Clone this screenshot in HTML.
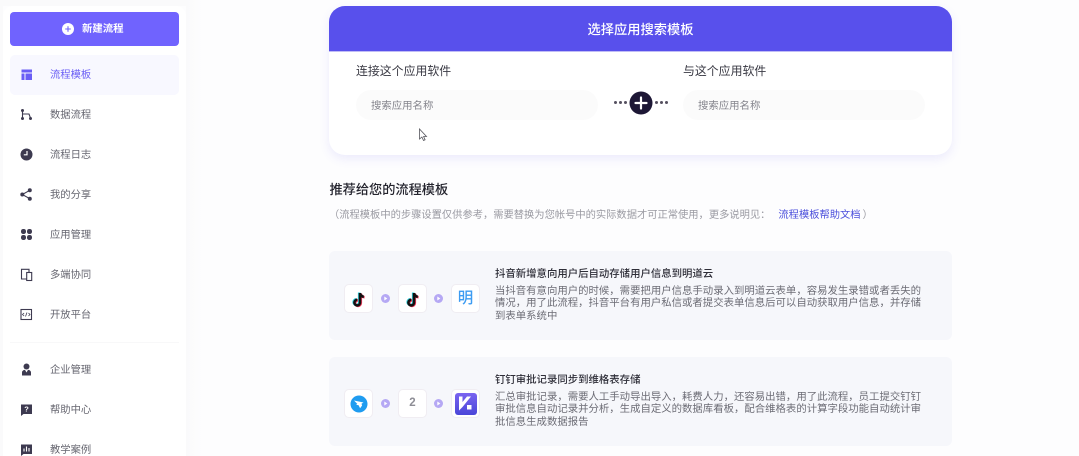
<!DOCTYPE html>
<html lang="zh"><head><meta charset="utf-8">
<style>
html,body{margin:0;padding:0;overflow:hidden}
body{width:1079px;height:456px;background:#fdfdfe;position:relative;font-family:"Liberation Sans","Noto Sans CJK SC",sans-serif;color:#33333f}
#w{position:absolute;left:0;top:0;width:1079px;height:456px;overflow:hidden;filter:blur(.3px)}
.a{position:absolute;white-space:nowrap}
#leftbg{left:0;top:0;width:3px;height:456px;background:#fafafb}
#topbg{left:0;top:0;width:186px;height:6px;background:#fafafb}
#side{left:3px;top:6px;width:183px;height:450px;background:#fff;border-radius:10px 10px 0 0}
#strip{left:186px;top:0;width:16px;height:456px;background:linear-gradient(90deg,#fafafb,#fdfdfe)}
#btn{left:10px;top:12px;width:169px;height:34px;background:#7063fe;border-radius:4px;color:#fff;font-size:10.4px;font-weight:700}
#btn span{position:absolute;left:72px;top:10px;line-height:15px}
#act{left:10px;top:55px;width:169px;height:40px;background:#f8f8ff;border-radius:5px}
.it{left:50px;font-size:10.3px;line-height:14px;color:#666670}
.ic{position:absolute;left:20px;width:14px;height:14px}
#div{left:10px;top:342px;width:169px;height:1px;background:#f8f8f9}
#card{left:329px;top:6px;width:623px;height:149px;background:#fff;border-radius:16px;box-shadow:0 4px 10px rgba(88,80,236,.10)}
#hd{left:329px;top:6px;width:623px;height:45px;background:#5850ec;border-radius:16px 16px 0 0;border-bottom:1px solid #c0bcf6;color:#fff;font-size:13.25px;font-weight:500;text-align:center;line-height:47px}
.lb{font-size:11.9px;line-height:16px;color:#3a3a44}
.inp{top:90px;width:242px;height:30px;background:#fbfbfb;border-radius:15px;color:#85858d;font-size:10.4px;line-height:33px;text-indent:15px}
.dot{width:3px;height:3px;border-radius:50%;background:#55505f;top:101px}
#h2{left:329.5px;top:181px;font-size:13.2px;font-weight:500;line-height:18px;color:#24242e}
#sub{left:329px;top:208px;font-size:10.28px;line-height:15px;color:#9a9aa2}
#sub b{font-weight:400;color:#4c50dc;margin-left:8px;margin-right:2px}
.c{left:329px;width:623px;height:89px;background:#f6f7fb;border-radius:6px}
.t{left:495px;font-size:10.4px;font-weight:500;line-height:14px;color:#2e2e38}
.d{left:495px;font-size:10.4px;line-height:12.4px;color:#6c6c75}
.b{width:29px;height:29px;box-sizing:border-box;background:#fff;border:1px solid #f0edf2;border-radius:5px;text-align:center}
.b svg{position:absolute;left:-.5px;top:-.5px}
.ar{width:9px;height:9px}
</style></head><body>
<div id="w">
<div class="a" id="leftbg"></div><div class="a" id="topbg"></div><div class="a" id="strip"></div>
<div class="a" id="side"></div>
<div class="a" id="btn">
<svg style="position:absolute;left:52px;top:11px" width="12" height="12" viewBox="0 0 12 12"><circle cx="6" cy="6" r="6" fill="#fff"/><path d="M6 3.2v5.6M3.2 6h5.6" stroke="#7063fe" stroke-width="1.1"/></svg>
<span>新建流程</span></div>
<div class="a" id="act"></div>

<svg class="ic" style="top:68px" viewBox="0 0 14 14"><path fill="#6a5ef5" d="M1.500 1.500h10.500v3H1.500zM1.500 5.500h3v6.500h-3zM5.500 5.500h6.500v6.500H5.500z"/></svg>
<div class="a it" style="top:69px;color:#6a5ef5">流程模板</div>

<svg class="ic" style="top:108px" viewBox="0 0 14 14"><g fill="#3d3a50"><circle cx="2.500" cy="2.500" r="1.500"/><circle cx="2.500" cy="10.500" r="1.500"/><circle cx="10.500" cy="10.500" r="1.500"/></g><path d="M2.500 3v7M2.500 6h6.500l1.500 4" fill="none" stroke="#3d3a50" stroke-width="1.100"/></svg>
<div class="a it" style="top:109px">数据流程</div>

<svg class="ic" style="top:148px" viewBox="0 0 14 14"><circle cx="6.500" cy="6.500" r="6" fill="#3d3a50"/><path d="M7 3v3.800H3.800" fill="none" stroke="#fff" stroke-width="1.200"/></svg>
<div class="a it" style="top:149px">流程日志</div>

<svg class="ic" style="top:188px" viewBox="0 0 14 14"><g fill="#3d3a50"><circle cx="9.800" cy="2.300" r="2"/><circle cx="9.800" cy="10.700" r="2"/><circle cx="2.300" cy="6.500" r="2"/></g><path d="M9.800 2.300L2.300 6.500l7.500 4.200" fill="none" stroke="#3d3a50" stroke-width="1.100"/></svg>
<div class="a it" style="top:189px">我的分享</div>

<svg class="ic" style="top:228px" viewBox="0 0 14 14"><g fill="#3d3a50"><rect x="1" y="1" width="5" height="5" rx="2.200"/><rect x="7" y="1" width="5" height="5" rx="2.200"/><rect x="1" y="7" width="5" height="5" rx="2.200"/><rect x="7" y="7" width="5" height="5" rx="2.200"/></g></svg>
<div class="a it" style="top:229px">应用管理</div>

<svg class="ic" style="top:268px" viewBox="0 0 14 14"><path d="M6.500 11H1.500V1.300H9v3" fill="none" stroke="#3d3a50" stroke-width="1.100"/><rect x="6.700" y="4.500" width="5" height="8" fill="#fff" stroke="#3d3a50" stroke-width="1.100"/></svg>
<div class="a it" style="top:269px">多端协同</div>

<svg class="ic" style="top:308px" viewBox="0 0 14 14"><rect x="1" y="1.500" width="10.500" height="10" fill="none" stroke="#3d3a50" stroke-width="1.100"/><path d="M4.100 5L2.500 6.500 4.100 8M8.500 5L10 6.500 8.500 8M7 4.500L5.500 8.500" fill="none" stroke="#3d3a50" stroke-width=".8"/></svg>
<div class="a it" style="top:309px">开放平台</div>

<div class="a" id="div"></div>

<svg class="ic" style="top:363px" viewBox="0 0 14 14"><circle cx="6.500" cy="3.500" r="3" fill="#3d3a50"/><path fill="#3d3a50" d="M2 12.500V9.500c0-1.600 1.500-2.600 3-2.600L6.500 9.500 8 6.900c1.500 0 3 1 3 2.600v3z"/></svg>
<div class="a it" style="top:364px">企业管理</div>

<svg class="ic" style="top:403px" viewBox="0 0 14 14"><path fill="#3d3a50" d="M1 1.500h11V11H3.500L1 13z"/><text x="6.500" y="8.700" font-size="7.500" font-weight="700" text-anchor="middle" fill="#fff" font-family="Liberation Sans">?</text></svg>
<div class="a it" style="top:404px">帮助中心</div>

<svg class="ic" style="top:443px" viewBox="0 0 14 14"><path fill="#3d3a50" d="M1 1.500h11V11H3.500L1 13z"/><path stroke="#fff" stroke-width="1.100" d="M4 5.500v3M6.500 3.500v5M9 5v3.500"/></svg>
<div class="a it" style="top:444px">教学案例</div>

<div class="a" id="card"></div>
<div class="a" id="hd">选择应用搜索模板</div>
<div class="a lb" style="left:356px;top:63px">连接这个应用软件</div>
<div class="a lb" style="left:683px;top:63px">与这个应用软件</div>
<div class="a inp" style="left:356px">搜索应用名称</div>
<div class="a inp" style="left:683px">搜索应用名称</div>
<div class="a dot" style="left:614px"></div><div class="a dot" style="left:619px"></div><div class="a dot" style="left:624px"></div>
<div class="a dot" style="left:655px"></div><div class="a dot" style="left:660px"></div><div class="a dot" style="left:665px"></div>
<svg class="a" style="left:629px;top:91px" width="24" height="24" viewBox="0 0 24 24"><circle cx="12" cy="12" r="11.500" fill="#1d1735"/><path d="M12 6.500v11M6.500 12h11" stroke="#fff" stroke-width="2.200" stroke-linecap="round"/></svg>
<svg class="a" style="left:418px;top:128px" width="10" height="14" viewBox="0 0 10 14"><path d="M1.500 1v10l2.400-2 1.600 3.500 1.600-.7L5.600 8.500h2.900z" fill="#fff" stroke="#55555c" stroke-width=".8"/></svg>

<div class="a" id="h2">推荐给您的流程模板</div>
<div class="a" id="sub">（流程模板中的步骤设置仅供参考，需要替换为您帐号中的实际数据才可正常使用，更多说明见：<b>流程模板帮助文档</b>）</div>

<div class="a c" style="top:251px"></div>
<div class="a b" style="left:344px;top:284px"><svg width="28" height="28" viewBox="0 0 28 28"><path d="M15 8v9.600a2.800 2.800 0 1 1-2.800-2.800M15 8.200c.4 2 1.800 3.300 3.800 3.500" fill="none" stroke="#32d4e0" stroke-width="2.600" transform="translate(-.8 -.5)"/><path d="M15 8v9.600a2.800 2.800 0 1 1-2.800-2.800M15 8.200c.4 2 1.800 3.300 3.800 3.500" fill="none" stroke="#f03a5c" stroke-width="2.600" transform="translate(.8 .5)"/><path d="M15 8v9.600a2.800 2.800 0 1 1-2.800-2.800M15 8.200c.4 2 1.800 3.300 3.800 3.500" fill="none" stroke="#111" stroke-width="2.600"/></svg></div>
<svg class="a ar" style="left:381px;top:294px" viewBox="0 0 9 9"><circle cx="4.500" cy="4.500" r="4.500" fill="#b5a8f4"/><path d="M3.300 2.500v4l3-2z" fill="#fff"/></svg>
<div class="a b" style="left:398px;top:284px"><svg width="28" height="28" viewBox="0 0 28 28"><path d="M15 8v9.600a2.800 2.800 0 1 1-2.800-2.800M15 8.200c.4 2 1.800 3.300 3.800 3.500" fill="none" stroke="#32d4e0" stroke-width="2.600" transform="translate(-.8 -.5)"/><path d="M15 8v9.600a2.800 2.800 0 1 1-2.800-2.800M15 8.200c.4 2 1.800 3.300 3.800 3.500" fill="none" stroke="#f03a5c" stroke-width="2.600" transform="translate(.8 .5)"/><path d="M15 8v9.600a2.800 2.800 0 1 1-2.800-2.800M15 8.200c.4 2 1.800 3.300 3.800 3.500" fill="none" stroke="#111" stroke-width="2.600"/></svg></div>
<svg class="a ar" style="left:434px;top:294px" viewBox="0 0 9 9"><circle cx="4.500" cy="4.500" r="4.500" fill="#b5a8f4"/><path d="M3.300 2.500v4l3-2z" fill="#fff"/></svg>
<div class="a b" style="left:451px;top:284px;color:#3d9cf2;font-size:15.500px;line-height:27px;font-weight:500">明</div>
<div class="a t" style="top:268px">抖音新增意向用户后自动存储用户信息到明道云</div>
<div class="a d" style="top:286px">当抖音有意向用户的时候，需要把用户信息手动录入到明道云表单，容易发生录错或者丢失的<br>情况，用了此流程，抖音平台有用户私信或者提交表单信息后可以自动获取用户信息，并存储<br>到表单系统中</div>

<div class="a c" style="top:357px"></div>
<div class="a b" style="left:344px;top:389px"><svg width="28" height="28" viewBox="0 0 28 28"><circle cx="14" cy="14" r="8.500" fill="#1f9cf0"/><path d="M9 10.500l9.500 2-2 1.200.6 1.800-2 2.800-1.500-3-2.500-.6 1.200-.8z" fill="#fff"/></svg></div>
<svg class="a ar" style="left:381px;top:399px" viewBox="0 0 9 9"><circle cx="4.500" cy="4.500" r="4.500" fill="#b5a8f4"/><path d="M3.300 2.500v4l3-2z" fill="#fff"/></svg>
<div class="a b" style="left:398px;top:389px;color:#8d8d95;font-size:11.500px;line-height:27px;font-weight:700">2</div>
<svg class="a ar" style="left:434px;top:399px" viewBox="0 0 9 9"><circle cx="4.500" cy="4.500" r="4.500" fill="#b5a8f4"/><path d="M3.300 2.500v4l3-2z" fill="#fff"/></svg>
<div class="a b" style="left:451px;top:389px"><svg width="28" height="28" viewBox="0 0 28 28"><defs><linearGradient id="g" x1="0" y1="0" x2="0" y2="1"><stop offset="0" stop-color="#7a64f0"/><stop offset="1" stop-color="#4a46d8"/></linearGradient></defs><rect x="3" y="3" width="22" height="22" rx="3" fill="url(#g)"/><path d="M7 6.500h3.500V12L15 6.500h4l-8.500 10.500L7 20.500z" fill="#fff"/><rect x="15" y="15" width="4.500" height="4.500" fill="#fff"/></svg></div>
<div class="a t" style="top:374px">钉钉审批记录同步到维格表存储</div>
<div class="a d" style="top:392px">汇总审批记录，需要人工手动导出导入，耗费人力，还容易出错，用了此流程，员工提交钉钉<br>审批信息自动记录并分析，生成自定义的数据库看板，配合维格表的计算字段功能自动统计审<br>批信息生成数据报告</div>
</div>
</body></html>
